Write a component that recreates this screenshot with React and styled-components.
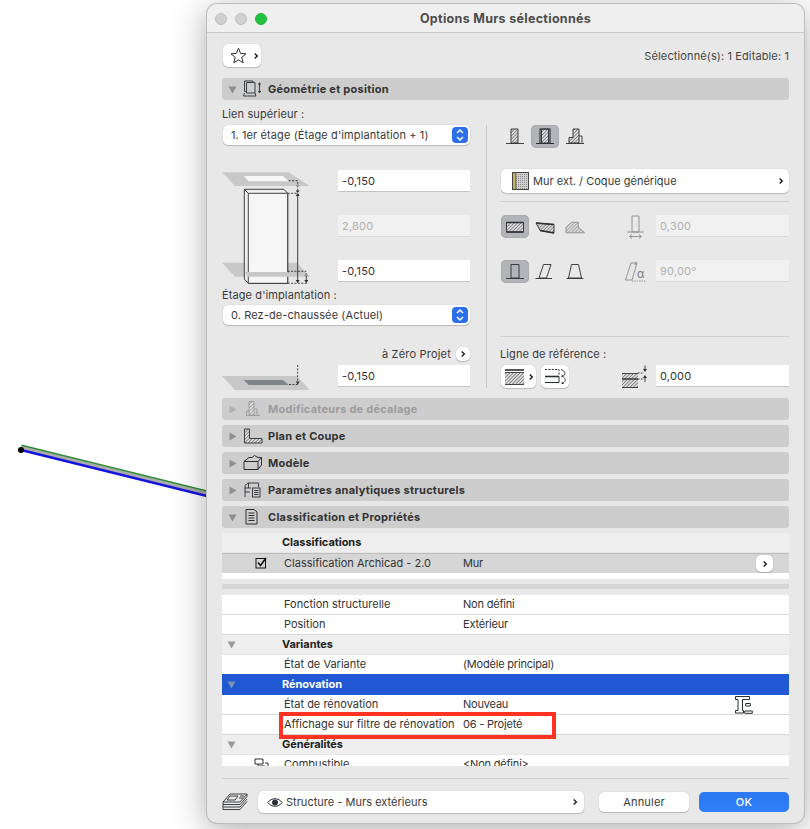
import React from 'react'
import styled, { createGlobalStyle } from 'styled-components'

const GlobalStyle = createGlobalStyle`
  html, body {
    margin: 0;
    background: #fff;
    overflow: hidden;
  }
  * { box-sizing: border-box; }
`

const Desktop = styled.div`
  position: relative;
  width: 810px;
  height: 829px;
  overflow: hidden;
  font-family: Inter, "Liberation Sans", sans-serif;
  font-size: 11px;
  color: #333;
`

const Canvas = styled.svg`
  position: absolute;
  left: 0;
  top: 0;
`

const Dialog = styled.div`
  position: absolute;
  left: 207px;
  top: 4px;
  width: 597px;
  height: 819px;
  background: #e8e8e8;
  border-radius: 10px;
  box-shadow: 0 0 0 1px #bcbcbc, 0 6px 34px rgba(0, 0, 0, 0.34);
  overflow: hidden;
`

const TitleBar = styled.div`
  position: relative;
  height: 29px;
  display: flex;
  align-items: center;
  justify-content: center;
  background: #efefef;
  border-bottom: 1px solid #c9c9c9;
  font-size: 12.5px;
  font-weight: 700;
  letter-spacing: 0.3px;
  color: #4c4c4c;
`

const Lights = styled.div`
  position: absolute;
  left: 8px;
  top: 9px;
  display: flex;
  gap: 8px;
`

const Light = styled.span`
  width: 12px;
  height: 12px;
  border-radius: 50%;
  background: ${props => props.color};
  border: 1px solid ${props => props.edge};
`

const Content = styled.div`
  padding: 0 15px;
`

const TopRow = styled.div`
  display: flex;
  align-items: center;
  justify-content: space-between;
  height: 23px;
  margin: 11px 0;
`

const WhiteButton = styled.div`
  display: flex;
  align-items: center;
  justify-content: ${props => props.justify || 'center'};
  flex: none;
  width: ${props => props.w}px;
  height: ${props => props.h}px;
  margin-left: ${props => props.ml || 0}px;
  padding: ${props => props.pad || 0};
  background: #fff;
  border-radius: 5px;
  box-shadow: 0 0 1px rgba(0, 0, 0, 0.25), 0 1px 1px rgba(0, 0, 0, 0.18);
`

const SmallText = styled.span`
  font-size: 11px;
  color: #444;
  letter-spacing: 0.12px;
`

const SectionHeader = styled.div`
  display: flex;
  align-items: center;
  height: 22px;
  margin-bottom: ${props => props.last ? 0 : 5}px;
  background: #cdcdcd;
  border-radius: 3px;
  font-size: 11px;
  font-weight: 700;
  letter-spacing: 0.25px;
  color: ${props => props.disabled ? '#9c9c9c' : '#333'};
`

const ArrowSlot = styled.span`
  display: flex;
  justify-content: center;
  width: 21px;
  flex: none;
`

const HeaderIconSlot = styled.span`
  display: flex;
  width: 25px;
  flex: none;
`

const Panel = styled.div`
  display: flex;
  height: 298px;
`

const LeftColumn = styled.div`
  width: 248px;
  flex: none;
  padding-top: 7px;
`

const Divider = styled.div`
  width: 1px;
  height: 263px;
  margin: 25px 13px 0 16px;
  flex: none;
  background: #cacaca;
`

const RightColumn = styled.div`
  flex: 1;
  padding-top: 25px;
`

const FieldLabel = styled.div`
  height: 14px;
  line-height: 14px;
  font-size: 11px;
  letter-spacing: 0.1px;
  color: #3a3a3a;
  margin-top: ${props => props.mt || 0}px;
`

const SelectBox = styled.div`
  display: flex;
  align-items: center;
  justify-content: space-between;
  height: 20px;
  margin: ${props => props.m || '4px 0 0 1px'};
  padding: 0 2px 0 8px;
  background: #fff;
  border-radius: 5px;
  box-shadow: 0 0 1px rgba(0, 0, 0, 0.25), 0 1px 1px rgba(0, 0, 0, 0.18);
  letter-spacing: 0.1px;
  color: #3a3a3a;
`

const Stepper = styled.span`
  display: flex;
  align-items: center;
  justify-content: center;
  width: 16px;
  height: 16px;
  border-radius: 4px;
  background: #2b70ea;
`

const HeightBlock = styled.div`
  display: flex;
  justify-content: space-between;
  height: 118px;
  margin-top: 25px;
`

const InputStack = styled.div`
  display: flex;
  flex-direction: column;
  gap: 24px;
`

const NumberField = styled.div`
  display: flex;
  align-items: center;
  align-self: flex-start;
  flex: none;
  width: ${props => props.w || 132}px;
  height: 21px;
  padding-left: 4px;
  background: ${props => props.disabled ? '#f1f1f1' : '#fff'};
  box-shadow: 0 1px 0 ${props => props.disabled ? '#d8d8d8' : '#c4c4c4'};
  letter-spacing: 0.2px;
  color: ${props => props.disabled ? '#b0b0b0' : '#333'};
`

const ZeroRow = styled.div`
  display: flex;
  align-items: center;
  justify-content: flex-end;
  gap: 5px;
  height: 14px;
  margin-top: 22px;
  letter-spacing: 0.2px;
  color: #3a3a3a;
`

const ElevationRow = styled.div`
  display: flex;
  justify-content: space-between;
  margin-top: 4px;
`

const IconRow = styled.div`
  display: flex;
  align-items: center;
  height: 23px;
  margin: ${props => props.m || '0 0 0 1px'};
`

const ToggleGroup = styled.div`
  display: flex;
  gap: 2px;
`

const Toggle = styled.span`
  display: flex;
  align-items: center;
  justify-content: center;
  width: 28px;
  height: 23px;
  border-radius: 5px;
  background: ${props => props.active ? '#b3b4b8' : 'transparent'};
  box-shadow: ${props => props.active ? 'inset 0 0 0 1px #a9aaae' : 'none'};
`

const ParamIcon = styled.span`
  display: flex;
  margin-left: auto;
  margin-right: ${props => props.gap || 10}px;
`

const WallSelect = styled.div`
  display: flex;
  align-items: center;
  gap: 4px;
  height: 24px;
  margin: 21px 0 0 1px;
  padding: 0 5px 0 11px;
  background: #fff;
  border-radius: 5px;
  box-shadow: 0 0 1px rgba(0, 0, 0, 0.25), 0 1px 1px rgba(0, 0, 0, 0.18);
  letter-spacing: 0.02px;
  color: #3a3a3a;
`

const Grow = styled.span`
  flex: 1;
`

const Rule = styled.div`
  height: 1px;
  margin-top: ${props => props.mt}px;
  background: #cfcfcf;
`

const Table = styled.div`
  height: 233px;
  margin-top: 5px;
  background: #e8e8e8;
  overflow: hidden;
`

const Row = styled.div`
  display: grid;
  grid-template-columns: 60px 181px 1fr;
  align-items: center;
  height: 20px;
  padding-bottom: 1px;
  background: #fff;
  border-bottom: 1px solid #d9d9d9;
  color: #333;
  letter-spacing: 0;
`

const GroupRow = styled(Row)`
  background: #eeeeee;
  border-bottom-color: #e6e6e6;
  font-weight: 700;
  color: #222;
  letter-spacing: -0.05px;
`

const SelectedGroup = styled(GroupRow)`
  height: 21px;
  margin-top: -1px;
  background: #2058d4;
  border-bottom: 0;
  color: #fff;
`

const CheckedRow = styled(Row)`
  position: relative;
  background: #d6d6d6;
  border-top: 1px solid #bdbdbd;
  border-bottom: 0;
`

const ArrowCell = styled.span`
  display: flex;
  align-items: center;
  padding-left: 5px;
`

const IconCell = styled.span`
  display: flex;
  align-items: center;
  justify-content: flex-end;
  padding-right: ${props => props.pr || 12}px;
`

const NameCell = styled.span`
  padding-left: 2px;
  white-space: nowrap;
`

const ValueCell = styled.span`
  white-space: nowrap;
  letter-spacing: -0.2px;
`

const Strip = styled.div`
  height: ${props => props.h}px;
  background: ${props => props.bg};
`

const RowButton = styled(WhiteButton)`
  position: absolute;
  right: 16px;
  top: 1px;
`

const FloatIcon = styled.span`
  position: absolute;
  left: 528px;
  top: 692px;
  display: flex;
`

const Highlight = styled.div`
  position: absolute;
  left: 72px;
  top: 708px;
  width: 277px;
  height: 27px;
  border: 4px solid #ff3322;
`

const Footer = styled.div`
  display: flex;
  align-items: center;
  height: 22px;
  margin-top: 12px;
`

const StackSlot = styled.span`
  display: flex;
  width: 36px;
  flex: none;
`

const ViewSelect = styled.div`
  display: flex;
  align-items: center;
  gap: 3px;
  width: 326px;
  height: 22px;
  padding: 0 6px 0 9px;
  background: #fff;
  border-radius: 5px;
  box-shadow: 0 0 1px rgba(0, 0, 0, 0.25), 0 1px 1px rgba(0, 0, 0, 0.18);
  letter-spacing: 0.02px;
  color: #3a3a3a;
`

const DialogButton = styled.div`
  display: flex;
  align-items: center;
  justify-content: center;
  width: 90px;
  height: 20px;
  margin-left: ${props => props.ml}px;
  border-radius: 5px;
  background: ${props => props.primary ? 'linear-gradient(#2c79f2, #2f7ff8)' : '#fff'};
  box-shadow: ${props => props.primary ? 'none' : '0 0 1px rgba(0, 0, 0, 0.25), 0 1px 1px rgba(0, 0, 0, 0.18)'};
  color: ${props => props.primary ? '#fff' : '#3a3a3a'};
  font-weight: ${props => props.primary ? 500 : 400};
  letter-spacing: 0.2px;
`

const ink = '#2b2f33'

const Chevron = ({ color = '#222', size = 7 }) => (
  <svg width={size} height={size + 2} viewBox="0 0 7 9">
    <path d="M2 1.5 5 4.5 2 7.5" fill="none" stroke={color} strokeWidth="1.7" />
  </svg>
)

const Triangle = ({ open, color = '#8f8f8f' }) => (
  <svg width="9" height="9" viewBox="0 0 9 9">
    <path d={open ? 'M0.5 1.5H8.5L4.5 8.5Z' : 'M1.5 0.5V8.5L8.5 4.5Z'} fill={color} />
  </svg>
)

const StepperIcon = () => (
  <svg width="10" height="14" viewBox="0 0 10 14">
    <path d="M2 5 5 2 8 5M2 9 5 12 8 9" fill="none" stroke="#fff" strokeWidth="1.5" />
  </svg>
)

const Hatches = () => (
  <Canvas width="0" height="0">
    <defs>
      <pattern id="hatch" width="2.4" height="2.4" patternUnits="userSpaceOnUse" patternTransform="rotate(-45)">
        <rect width="2.4" height="2.4" fill="#dedede" />
        <rect width="2.4" height="0.8" fill="#777" />
      </pattern>
      <pattern id="hatchGrey" width="2.4" height="2.4" patternUnits="userSpaceOnUse" patternTransform="rotate(-45)">
        <rect width="2.4" height="2.4" fill="#e0e0e0" />
        <rect width="2.4" height="0.9" fill="#a0a0a0" />
      </pattern>
      <pattern id="stipple" width="2" height="2" patternUnits="userSpaceOnUse">
        <rect width="2" height="2" fill="#d0d0d0" />
        <rect width="1" height="1" fill="#8c8c8c" />
      </pattern>
    </defs>
  </Canvas>
)

const WallScene = () => (
  <Canvas width="207" height="829" viewBox="0 0 207 829">
    <path d="M21 447.6 207 493.6" stroke="#a9aca9" strokeWidth="4" />
    <path d="M21.5 445.2 207 491" stroke="#2f8a38" strokeWidth="1.4" />
    <path d="M21 450 207 496" stroke="#1414e0" strokeWidth="2.4" />
    <circle cx="21" cy="450" r="3" fill="#000" />
  </Canvas>
)

const Star = () => (
  <svg width="17" height="17" viewBox="0 0 17 17">
    <path d="M8.5 1.2 10.6 6.4 16 6.8 11.8 10.3 13.2 15.8 8.5 12.8 3.8 15.8 5.2 10.3 1 6.8 6.4 6.4Z" fill="none" stroke={ink} strokeWidth="1" />
  </svg>
)

const GeometryIcon = () => (
  <svg width="20" height="18" viewBox="0 0 20 18" fill="none" stroke={ink} strokeWidth="0.9">
    <path d="M3.5 2.5H12V13H3.5ZM1.5 1V11.5H3.5M1.5 1H10V2.5M1.5 13 0.5 16H13L12 13" />
    <path d="M16.5 3V12.5" />
    <path d="M14.8 4.5 16.5 2.2 18.2 4.5ZM14.8 11 16.5 13.3 18.2 11Z" fill={ink} stroke="none" />
  </svg>
)

const OffsetIcon = () => (
  <svg width="20" height="18" viewBox="0 0 20 18" fill="none" stroke="#9a9a9a" strokeWidth="0.9">
    <path d="M6 1.5H11V15H6Z" fill="url(#hatchGrey)" />
    <path d="M3 15.5H17M11 9H14V15M3.5 15V11H6" />
  </svg>
)

const PlanIcon = () => (
  <svg width="20" height="18" viewBox="0 0 20 18" fill="none" stroke={ink} strokeWidth="0.9">
    <path d="M1.5 2H6.5V11.5H19V16H1.5Z" fill="url(#hatch)" />
  </svg>
)

const ModelIcon = () => (
  <svg width="20" height="18" viewBox="0 0 20 18" fill="none" stroke={ink} strokeWidth="1">
    <path d="M1 7.5 6 3.5H9L11.5 1.5 15 3.5H18.5V11L15 15.5H1Z" />
    <path d="M1 7.5H15V15.5M15 7.5 18.5 3.5" />
  </svg>
)

const AnalyticIcon = () => (
  <svg width="20" height="18" viewBox="0 0 20 18" fill="none" stroke={ink} strokeWidth="0.9">
    <path d="M2 16V4.5L5 2H15.5V6M2 7H8M2 11H7M5.5 2V7" />
    <rect x="9.5" y="7" width="7.5" height="9" fill="#cdcdcd" />
    <path d="M11 9.5H15.5M11 11.5H15.5M11 13.5H15.5" />
  </svg>
)

const ClassIcon = () => (
  <svg width="20" height="18" viewBox="0 0 20 18" fill="none" stroke={ink} strokeWidth="1">
    <path d="M3 1.5H11L14 4V16H3Z" />
    <path d="M5.5 5H11.5M5.5 7.5H11.5M5.5 10H11.5M5.5 12.5H11.5" />
  </svg>
)

const HeightDiagram = () => (
  <svg width="90" height="118" viewBox="0 0 90 118" fill="none" stroke={ink} strokeWidth="0.9">
    <path d="M0 2.3H66.7L87.7 16H13Z" fill="#c8c8c8" stroke="none" />
    <path d="M21.7 6H61L66.7 11.3H26.7Z" fill="#f7f7f7" stroke="none" />
    <path d="M0 92.7H75L87.7 106.7H13Z" fill="#c8c8c8" stroke="none" />
    <path d="M22.3 19.3H62L65.7 23.3V113.3H26.3L22.3 109Z" fill="#f3f3f3" fillOpacity="0.75" />
    <path d="M26.3 23.3H65.7V113.3H26.3ZM22.3 19.3 26.3 23.3" fill="#f6f6f6" />
    <path d="M22.5 102H65.5L70 106.7H26.5Z" fill="#c8c8c8" stroke="none" />
    <path d="M66.7 10.7H75.7V22M65.7 23.3H76M65.7 101.3H84.3M65.7 113.3H85" strokeDasharray="2 1.4" />
    <path d="M75.7 24V112.5" />
    <path d="M73.7 26 75.7 23 77.7 26ZM73.7 110 75.7 113 77.7 110ZM73.7 20.5 75.7 23 77.7 20.5Z" fill={ink} stroke="none" />
    <path d="M73.7 16.5 75.7 13.5 77.7 16.5Z" fill="#8e979c" stroke="none" />
    <path d="M84.3 103V112.5" />
    <path d="M82.3 106 84.3 103 86.3 106Z" fill="#8e979c" stroke="none" />
    <path d="M82.3 110 84.3 113 86.3 110Z" fill={ink} stroke="none" />
  </svg>
)

const ZeroDiagram = () => (
  <svg width="90" height="26" viewBox="0 0 90 26" fill="none" stroke={ink} strokeWidth="0.9">
    <path d="M0 11H75L87.7 25H13Z" fill="#c8c8c8" stroke="none" />
    <path d="M21.7 15H61L66.7 20H26.7Z" fill="#7e868a" stroke="none" />
    <path d="M75.7 0V17M67 19.5H75.7" strokeDasharray="2 1.4" />
    <path d="M73.7 16.5 75.7 19.5 77.7 16.5Z" fill={ink} stroke="none" />
  </svg>
)

const Flat = ({ grey, children, w = 20, h = 18 }) => (
  <svg width={w} height={h} viewBox={`0 0 ${w} ${h}`} fill="none" stroke={grey ? '#8a8a8a' : ink} strokeWidth="0.9">
    {children}
  </svg>
)

const FillIn = ({ d, grey }) => <path d={d} fill={grey ? 'url(#hatchGrey)' : 'url(#hatch)'} />

const WallOut = () => (
  <Flat>
    <FillIn d="M6 1H13V15H6Z" />
    <path d="M1 15.5H19" />
  </Flat>
)

const WallCenter = () => (
  <Flat>
    <FillIn d="M6.5 1H13.5V15H6.5Z" />
    <path d="M5 1H15V15.5H5ZM1 15.5H19" strokeWidth="1.1" />
  </Flat>
)

const WallStep = () => (
  <Flat>
    <FillIn d="M8 1H14V15H4V9.5H8Z" />
    <path d="M1 15.5H19M14 8H17V15" />
  </Flat>
)

const SectionRect = () => (
  <Flat>
    <FillIn d="M1.5 4.5H18.5V14H1.5Z" />
    <path d="M1.5 4.5H18.5M1.5 14H18.5" strokeWidth="1.6" />
  </Flat>
)

const SectionTaper = () => (
  <Flat>
    <FillIn d="M1 5 19 6.5V15L5 12.5Z" />
    <path d="M1 5 19 6.5M5 12.5 19 15" strokeWidth="1.5" />
  </Flat>
)

const SectionProfile = () => (
  <Flat grey>
    <FillIn grey d="M1 9.2 6.7 4.2H13.3V9.2L19.5 14.8H1Z" />
  </Flat>
)

const TopUpright = () => (
  <Flat>
    <path d="M6 1.5H14V15H6ZM1 15.5H19" />
  </Flat>
)

const TopSlant = () => (
  <Flat>
    <path d="M8.5 1.5H16L11.5 15H4ZM0.5 15.5H17" />
  </Flat>
)

const TopTaper = () => (
  <Flat>
    <path d="M6.5 1.5H13.5L16.5 15H3.5ZM1.5 15.5H18.5" />
  </Flat>
)

const ThicknessIcon = () => (
  <Flat grey w="20" h="24">
    <path d="M6 1V17H13V1ZM1 17H18" />
    <path d="M4 21.5H15" />
    <path d="M6 19.5 3.5 21.5 6 23.5M13 19.5 15.5 21.5 13 23.5" />
  </Flat>
)

const SlantIcon = () => (
  <Flat grey w="24" h="24">
    <path d="M7 3H13L8 20H1.5ZM12 1.5 11 5" />
    <path d="M8 21H22" strokeDasharray="1.4 1" />
    <text x="13" y="18" fontSize="11" fill="#777" stroke="none" fontFamily="Inter, sans-serif">α</text>
  </Flat>
)

const MaterialSwatch = () => (
  <svg width="17" height="18" viewBox="0 0 17 18">
    <rect x="0.5" y="0.5" width="16" height="17" fill="url(#stipple)" stroke="#444" />
    <rect x="1" y="1" width="2.5" height="16" fill="#c4b35a" />
    <path d="M3.8 1V17" stroke="#333" strokeWidth="0.7" />
  </svg>
)

const RefLineIcon = () => (
  <svg width="21" height="18" viewBox="0 0 21 18" fill="none" stroke={ink}>
    <rect x="1" y="5" width="19" height="11" fill="url(#hatch)" stroke="none" />
    <path d="M1 2H20" strokeWidth="1.6" />
    <path d="M1 4.5H20M1 16.5H20" strokeWidth="0.9" />
  </svg>
)

const RefFlipIcon = () => (
  <svg width="25" height="18" viewBox="0 0 25 18" fill="none" stroke={ink} strokeWidth="1">
    <path d="M2 1.5H16V7" strokeDasharray="2 1.4" />
    <path d="M2 8.5H16" strokeWidth="1.6" />
    <path d="M2 14.5H16V8.5" />
    <path d="M18 1.5C23 3.5 23 6.5 19.5 8.5M19 15.5C23 13.5 23 11.5 21 9.5" strokeWidth="0.9" />
    <path d="M19 6.5 18.5 9 21 9ZM19 13.5 18.5 16 21 16Z" fill={ink} stroke="none" />
  </svg>
)

const OffsetLineIcon = () => (
  <svg width="28" height="24" viewBox="0 0 28 24" fill="none" stroke={ink} strokeWidth="0.9">
    <rect x="1" y="9" width="16" height="14" fill="url(#hatch)" stroke="none" />
    <path d="M1 8.5H17M1 22.5H17" />
    <path d="M1 14H17" strokeWidth="1.4" />
    <path d="M17 8H23M17 14H23" strokeDasharray="1.6 1.2" />
    <path d="M24 0.5V5.5M24 12V17" />
    <path d="M22 4 24 7 26 4ZM22 13 24 10 26 13Z" fill={ink} stroke="none" />
  </svg>
)

const CheckBox = () => (
  <svg width="12" height="12" viewBox="0 0 12 12">
    <rect x="1" y="1.5" width="9.5" height="9.5" fill="none" stroke="#111" strokeWidth="1" />
    <path d="M3 5.5 5.5 8.5 11 1" fill="none" stroke="#111" strokeWidth="1.6" />
  </svg>
)

const CraneIcon = () => (
  <svg width="18" height="18" viewBox="0 0 18 18" fill="none" stroke={ink} strokeWidth="1">
    <path d="M.5.5H14.5V3.5H7.5V14.5H8.5V17H.5V14.5H3V3.5H.5Z" />
    <path d="M10.7 7.5H15.3V10H10.7ZM9.7 15H17.3V17.3H9.7Z" />
  </svg>
)

const PropertyIcon = () => (
  <svg width="16" height="12" viewBox="0 0 16 12" fill="none" stroke={ink} strokeWidth="1">
    <path d="M1 1H9V6H1ZM4 6V11H14V5H11M5 8H11" />
  </svg>
)

const LayersIcon = () => (
  <svg width="26" height="18" viewBox="0 0 26 18" fill="none" stroke={ink} strokeWidth="0.9">
    <path d="M8 1H25L18 9H1Z" />
    <path d="M1 9V11.5H18L25 3.5V1M1 11.5V14H18L25 6M1 14V16.5H18L25 8.5" />
    <path d="M8 3H16L13 7H5ZM18 3H22M17 5H21" />
  </svg>
)

const EyeIcon = () => (
  <svg width="16" height="11" viewBox="0 0 16 11" fill="none" stroke={ink} strokeWidth="1">
    <path d="M.8 5.5C4.5.5 11.5.5 15.2 5.5 11.5 10.5 4.5 10.5.8 5.5Z" />
    <circle cx="8" cy="5.5" r="2.6" fill={ink} />
  </svg>
)

const headers = [
  { label: 'Modificateurs de décalage', icon: <OffsetIcon />, disabled: true },
  { label: 'Plan et Coupe', icon: <PlanIcon /> },
  { label: 'Modèle', icon: <ModelIcon /> },
  { label: 'Paramètres analytiques structurels', icon: <AnalyticIcon /> },
  { label: 'Classification et Propriétés', icon: <ClassIcon />, open: true, last: true },
]

const Section = ({ label, icon, open, disabled, last }) => (
  <SectionHeader disabled={disabled} last={last}>
    <ArrowSlot><Triangle open={open} color={disabled ? '#b0b0b0' : '#8f8f8f'} /></ArrowSlot>
    <HeaderIconSlot>{icon}</HeaderIconSlot>
    {label}
  </SectionHeader>
)

const Property = ({ name, value, icon }) => (
  <Row>
    <IconCell>{icon}</IconCell>
    <NameCell>{name}</NameCell>
    <ValueCell>{value}</ValueCell>
  </Row>
)

const Group = ({ label, arrow = true }) => (
  <GroupRow>
    <ArrowCell>{arrow && <Triangle open color="#999" />}</ArrowCell>
    <span>{label}</span>
  </GroupRow>
)

const App = () => (
  <Desktop>
    <GlobalStyle />
    <Hatches />
    <WallScene />
    <Dialog>
      <TitleBar>
        <Lights>
          <Light color="#d0d0d0" edge="#bdbdbd" />
          <Light color="#d0d0d0" edge="#bdbdbd" />
          <Light color="#22c23f" edge="#1fb339" />
        </Lights>
        Options Murs sélectionnés
      </TitleBar>
      <Content>
        <TopRow>
          <WhiteButton w={38} h={23} ml={1} pad="0 2px 0 7px" justify="space-between">
            <Star />
            <Chevron size={6} />
          </WhiteButton>
          <SmallText>Sélectionné(s): 1 Editable: 1</SmallText>
        </TopRow>
        <Section label="Géométrie et position" icon={<GeometryIcon />} open last />
        <Panel>
          <LeftColumn>
            <FieldLabel>Lien supérieur :</FieldLabel>
            <SelectBox>
              1. 1er étage (Étage d'implantation + 1)
              <Stepper><StepperIcon /></Stepper>
            </SelectBox>
            <HeightBlock>
              <HeightDiagram />
              <InputStack>
                <NumberField>-0,150</NumberField>
                <NumberField disabled>2,800</NumberField>
                <NumberField>-0,150</NumberField>
              </InputStack>
            </HeightBlock>
            <FieldLabel>Étage d'implantation :</FieldLabel>
            <SelectBox m="3px 0 0 1px">
              0. Rez-de-chaussée (Actuel)
              <Stepper><StepperIcon /></Stepper>
            </SelectBox>
            <ZeroRow>
              à Zéro Projet
              <WhiteButton w={14} h={14}><Chevron size={6} /></WhiteButton>
            </ZeroRow>
            <ElevationRow>
              <ZeroDiagram />
              <NumberField>-0,150</NumberField>
            </ElevationRow>
          </LeftColumn>
          <Divider />
          <RightColumn>
            <IconRow>
              <ToggleGroup>
                <Toggle><WallOut /></Toggle>
                <Toggle active><WallCenter /></Toggle>
                <Toggle><WallStep /></Toggle>
              </ToggleGroup>
            </IconRow>
            <WallSelect>
              <MaterialSwatch />
              Mur ext. / Coque générique
              <Grow />
              <Chevron size={6} />
            </WallSelect>
            <Rule mt={8} />
            <IconRow m="13px 0 0 1px">
              <ToggleGroup>
                <Toggle active><SectionRect /></Toggle>
                <Toggle><SectionTaper /></Toggle>
                <Toggle><SectionProfile /></Toggle>
              </ToggleGroup>
              <ParamIcon><ThicknessIcon /></ParamIcon>
              <NumberField w={133} disabled>0,300</NumberField>
            </IconRow>
            <IconRow m="22px 0 0 1px">
              <ToggleGroup>
                <Toggle active><TopUpright /></Toggle>
                <Toggle><TopSlant /></Toggle>
                <Toggle><TopTaper /></Toggle>
              </ToggleGroup>
              <ParamIcon gap={8}><SlantIcon /></ParamIcon>
              <NumberField w={133} disabled>90,00°</NumberField>
            </IconRow>
            <Rule mt={53} />
            <FieldLabel mt={10}>Ligne de référence :</FieldLabel>
            <IconRow m="4px 0 0 1px">
              <WhiteButton w={35} h={23} pad="0 2px 0 3px" justify="space-between">
                <RefLineIcon />
                <Chevron size={6} />
              </WhiteButton>
              <WhiteButton w={28} h={23} ml={5}><RefFlipIcon /></WhiteButton>
              <ParamIcon gap={7}><OffsetLineIcon /></ParamIcon>
              <NumberField w={133}>0,000</NumberField>
            </IconRow>
          </RightColumn>
        </Panel>
        {headers.map(header => <Section key={header.label} {...header} />)}
        <Table>
          <Group label="Classifications" arrow={false} />
          <CheckedRow>
            <IconCell pr={15}><CheckBox /></IconCell>
            <NameCell>Classification Archicad - 2.0</NameCell>
            <ValueCell>Mur</ValueCell>
            <RowButton w={17} h={17}><Chevron size={6} /></RowButton>
          </CheckedRow>
          <Strip h={6} bg="#fff" />
          <Strip h={5} bg="#e8e8e8" />
          <Strip h={5} bg="#d6d6d6" />
          <Strip h={6} bg="#e8e8e8" />
          <Property name="Fonction structurelle" value="Non défini" />
          <Property name="Position" value="Extérieur" />
          <Group label="Variantes" />
          <Property name="État de Variante" value="(Modèle principal)" />
          <SelectedGroup>
            <ArrowCell><Triangle open color="#7f8fb8" /></ArrowCell>
            <span>Rénovation</span>
          </SelectedGroup>
          <Property name="État de rénovation" value="Nouveau" />
          <Property name="Affichage sur filtre de rénovation" value="06 - Projeté" />
          <Group label="Généralités" />
          <Property name="Combustible" value="<Non défini>" icon={<PropertyIcon />} />
        </Table>
        <Rule mt={12} />
        <Footer>
          <StackSlot><LayersIcon /></StackSlot>
          <ViewSelect>
            <EyeIcon />
            Structure - Murs extérieurs
            <Grow />
            <Chevron size={6} />
          </ViewSelect>
          <DialogButton ml={15}>Annuler</DialogButton>
          <DialogButton ml={10} primary>OK</DialogButton>
        </Footer>
      </Content>
      <FloatIcon><CraneIcon /></FloatIcon>
      <Highlight />
    </Dialog>
  </Desktop>
)

export default App
